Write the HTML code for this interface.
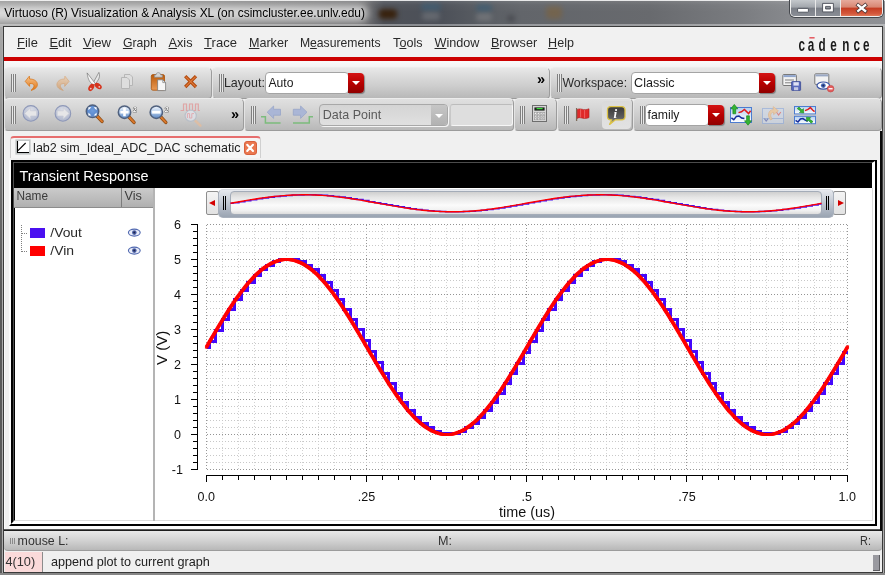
<!DOCTYPE html>
<html>
<head>
<meta charset="utf-8">
<title>Virtuoso (R) Visualization &amp; Analysis XL</title>
<style>
*{box-sizing:border-box;margin:0;padding:0}
html,body{width:885px;height:575px;overflow:hidden;background:#8c8e92}
body{position:relative;font-family:"Liberation Sans",sans-serif;font-size:13px;color:#1a1a1a}
/* title bar */
#title{position:absolute;left:0;top:0;width:885px;height:27px;overflow:hidden;background:linear-gradient(90deg,#8c8c8c 0,#808080 200px,#6c6c6e 365px,#4e5158 384px,#4c5058 440px,#585c62 480px,#62656a 520px,#686a6e 650px,#7a7c80 740px,#8a8c90 800px,#8e9094 885px)}
#title .shade{position:absolute;left:0;top:0;width:885px;height:27px;background:linear-gradient(180deg,rgba(255,255,255,.85) 0,rgba(255,255,255,.85) 1px,rgba(255,255,255,.10) 1.2px,rgba(255,255,255,.03) 5px,rgba(0,0,0,0) 12px,rgba(0,0,0,0) 24px,rgba(255,255,255,.35) 24.2px,rgba(255,255,255,.35) 26px)}
#title .glow{position:absolute;left:-14px;top:5px;width:382px;height:16px;background:#fff;opacity:.7;filter:blur(4px);border-radius:8px}
#title .blob{position:absolute;filter:blur(2.5px);border-radius:4px}
#title .txt{position:absolute;left:5px;top:6px;font-size:12px;line-height:14px;color:#000;white-space:nowrap;}
#wbtn{position:absolute;left:790px;top:0;width:93px;height:17px;border:1px solid #f0f0f0;border-top:0;border-radius:0 0 5px 5px;overflow:hidden;box-shadow:0 0 0 1px #44474c}
#wbtn div{position:absolute;top:0;height:16px}
#wbtn .mn{left:0;width:25px;background:linear-gradient(180deg,#c4c8cc 0,#a2a6ac 45%,#7a7e86 50%,#8a8e96 100%);border-right:1px solid #e8e8e8}
#wbtn .mx{left:25px;width:25px;background:linear-gradient(180deg,#c4c8cc 0,#a2a6ac 45%,#7a7e86 50%,#8a8e96 100%);border-right:1px solid #e8e8e8}
#wbtn .cl{left:50px;width:42px;background:linear-gradient(180deg,#e6aa9c 0,#d88672 45%,#c43c22 50%,#d4583c 85%,#e07858 100%)}
/* frame */
#frameL{position:absolute;left:0;top:27px;width:3px;height:548px;background:linear-gradient(180deg,#a8a8a8 0,#9a9a9a 60px,#707070 150px,#5a5a5a 260px,#5a5a5a 100%);border-right:1px solid #ababab}
#frame{position:absolute;left:3px;top:26px;width:880px;height:547px;border:1px solid #3a3a3a;background:#f0f0f0}
/* menubar */
#menubar{position:absolute;left:4px;top:27px;width:878px;height:30px;background:#f1f1f1}
#menubar span{position:absolute;top:8px;font-size:13px;line-height:15px;white-space:nowrap;color:#2a2a2a}
#menubar u{text-decoration:underline;text-underline-offset:1px;text-decoration-thickness:1px}
#logo{position:absolute;left:799px;top:34px;width:72px;height:20px}
#redline{position:absolute;left:4px;top:57px;width:878px;height:4px;background:#cc0000}
#under{position:absolute;left:4px;top:61px;width:878px;height:7px;background:linear-gradient(180deg,#fafafa,#f2f2f2)}
/* toolbars */
.tb{position:absolute;background:linear-gradient(180deg,#e8e8e8 0,#dcdcdc 25%,#cdcdcd 60%,#b8b8b8 100%);border:1px solid #9c9c9c;border-top-color:#ececec;border-left-color:#e4e4e4;border-radius:5px 5px 4px 4px}
.tb.t2{background:linear-gradient(180deg,#e0e0e0 0,#d6d6d6 30%,#c8c8c8 65%,#b8b8b8 100%)}
.grip{position:absolute;width:5px;border-left:1px solid #808080;border-right:1px solid #808080;background:#e8e8e8}
.grip:after{content:"";position:absolute;left:1px;top:0;bottom:0;width:1px;background:#808080}
.lbl{position:absolute;font-size:13px;line-height:15px;white-space:nowrap;color:#2a2a2a}
.combo{position:absolute;background:#fff;border:1px solid #a4a4a4;border-radius:4px}
.combo .t{position:absolute;left:3px;top:2px;font-size:13px;line-height:15px;white-space:nowrap}
.rbtn{position:absolute;background:linear-gradient(180deg,#d41414 0,#b80000 50%,#900000 100%);border-radius:0 4px 4px 0;box-shadow:1px 1px 1px rgba(0,0,0,.35)}
.rbtn:after{content:"";position:absolute;left:50%;top:50%;margin:-2px 0 0 -4px;border:4px solid transparent;border-top:4px solid #fff;border-bottom:0}
.chev{position:absolute;font-size:14.5px;font-weight:bold;color:#000;line-height:14px;letter-spacing:-1px}
.combo.dis{background:linear-gradient(180deg,#d4d4d4,#e0e0e0);border-color:#a8a8a8;box-shadow:1px 1px 0 #f4f4f4}
.combo.dis .t{color:#5a5a5a}
.combo.dis .gb{position:absolute;right:0;top:0;bottom:0;width:16px;background:linear-gradient(180deg,#c6c6c6,#b2b2b2);border-radius:0 3px 3px 0}
.combo.dis .gb:after{content:"";position:absolute;left:4px;top:9px;border:4px solid transparent;border-top:4px solid #fff;border-bottom:0}
.field{position:absolute;background:#dedede;border:1px solid #f6f6f6;border-top-color:#bcbcbc;border-left-color:#c8c8c8;border-radius:3px}
.pressed{position:absolute;background:linear-gradient(180deg,#dadada,#e2e2e2);border-radius:4px}
/* tab */
#tab{position:absolute;left:10px;top:136px;width:251px;height:22px;background:#f5f5f5;border:1px solid #d0d0d0;border-top:2px solid #e66e6e;border-bottom:0;border-radius:4px 4px 0 0}
#tab span{position:absolute;left:23px;top:2px;font-size:13px;line-height:15px;white-space:nowrap;color:#222}
.tclose{position:absolute;left:233px;top:3px;width:13px;height:14px;background:#ea7850;border:1px solid #d8603c;border-radius:3px}
/* panel */
#panel{position:absolute;left:11px;top:160px;width:866px;height:366px;background:#000}
#pwhite{position:absolute;left:15px;top:163px;width:860px;height:361px;background:#fff}
#pwhite2{position:absolute;left:15px;top:188px;width:858px;height:333px;background:#fff;border-right:1px solid #dcdcdc;border-bottom:1px solid #dcdcdc}
#ptitle{position:absolute;left:15px;top:163px;width:857px;height:25px;background:#000;color:#fff;font-size:15px;line-height:25px;white-space:nowrap}
#ptitle span{position:absolute;left:5px;top:0}
#lhead{position:absolute;left:14px;top:188px;width:140px;height:20px;background:linear-gradient(180deg,#cbcbcb,#b0b0b0);border-bottom:1px solid #8c8c8c}
#lhead span{position:absolute;top:1px;font-size:12.5px;line-height:15px;color:#3c3c3c}
#lhead i{position:absolute;left:107px;top:0;width:1px;height:19px;background:#7c7c7c}
#split{position:absolute;left:153px;top:188px;width:2px;height:333px;background:#b4b4b4}
.sw{position:absolute;width:15px;height:10px}
/* slider */
.sarrow{position:absolute;width:13px;height:24px;background:linear-gradient(180deg,#f4f4f4,#e2e2e2);border:1px solid #8e8e8e;border-radius:2px}
.sarrow b{position:absolute;top:7.5px;border:3.2px solid transparent}
.sarrow b.l{left:2px;border-right:6px solid #d40000;border-left:0}
.sarrow b.r{left:4px;border-left:6px solid #d40000;border-right:0}
#thumb{position:absolute;left:218px;top:189px;width:616px;height:29px;border-radius:5px;background:linear-gradient(180deg,#e6e9ee 0,#c4cad4 45%,#9aa4b2 100%);border:1px solid #a8b0bc;border-top-color:#d8dce2}
#thumb .inner{position:absolute;left:11px;top:1px;right:11px;height:24px;border-radius:4px;border:1px solid #a4acb8;background:linear-gradient(180deg,#cfcfcf 0,#e6e6e6 25%,#fbfbfb 60%,#f0f0f0 85%,#dcdcdc 100%)}
#thumb i{position:absolute;top:6px;width:1.4px;height:13.6px;background:#000}
/* status */
#sbar{position:absolute;left:4px;top:531px;width:878px;height:20px;background:linear-gradient(180deg,#e8e8e8,#d2d2d2 50%,#b8b8b8);border-bottom:1px solid #9c9c9c;border-radius:0 0 4px 4px}
#sbar span{position:absolute;top:3px;font-size:12px;line-height:14px;color:#333;white-space:nowrap}
#cmd{position:absolute;left:4px;top:551px;width:878px;height:21px;background:#f0f0f0}
#cmd .num{position:absolute;left:1px;top:1px;width:37px;height:20px;background:#fadada;font-size:13px;line-height:20px;padding-left:1px;color:#333}
#cmd .sep{position:absolute;left:38px;top:1px;width:1px;height:20px;background:#8c8c8c}
#cmd .num span{position:static;display:inline-block}
#cmd>span{position:absolute;left:48px;top:3px;font-size:13px;line-height:15px;color:#222;white-space:nowrap}
#cmd .sz{position:absolute;left:869px;top:4px;width:7px;height:16px;background:#9a9aa0;border-right:1px solid #5c5c60;border-bottom:1px solid #5c5c60}
#oline{position:absolute;left:4px;top:529px;width:878px;height:2px;background:linear-gradient(180deg,#777,#000)}
#orline{position:absolute;left:880px;top:131px;width:2px;height:400px;background:#0a0a0a}
#pbev{position:absolute;left:13px;top:162px;width:861px;height:360px;border-left:1px solid #4c4c4c;border-top:1px solid #4c4c4c}
#menubar span,.lbl,.combo .t,#tab span,#tTR,#lhead span,#sbar span,#cmd span,#tTitle,.chev{filter:grayscale(1)}
#frameR{position:absolute;left:883px;top:27px;width:2px;height:548px;background:linear-gradient(180deg,#a8a8a8 0,#9a9a9a 60px,#707070 150px,#5a5a5a 260px,#5a5a5a 100%);border-left:1px solid #ababab}
#frameB{position:absolute;left:0;top:573px;width:885px;height:2px;background:#878787}
.wstrip{position:absolute;background:#fafafa}
#tTitle{transform:translateX(-0.70px) scaleX(0.9951);transform-origin:0 50%}
#m1{transform:translateX(0.10px) scaleX(0.9920);transform-origin:0 50%}
#m2{transform:translateX(-0.50px) scaleX(0.9819);transform-origin:0 50%}
#m3{transform:translateX(-0.10px) scaleX(1.0088);transform-origin:0 50%}
#m4{transform:translateX(-0.10px) scaleX(0.9404);transform-origin:0 50%}
#m5{transform:translateX(-0.50px) scaleX(0.9771);transform-origin:0 50%}
#m6{transform:translateX(0.10px) scaleX(1.0010);transform-origin:0 50%}
#m7{transform:translateX(-0.10px) scaleX(0.9686);transform-origin:0 50%}
#m8{transform:translateX(-0.10px) scaleX(0.9372);transform-origin:0 50%}
#m9{transform:translateX(0.10px) scaleX(0.9684);transform-origin:0 50%}
#m10{transform:translateX(-0.50px) scaleX(0.9730);transform-origin:0 50%}
#m11{transform:translateX(-0.10px) scaleX(0.9688);transform-origin:0 50%}
#m12{transform:translateX(0.10px) scaleX(0.9645);transform-origin:0 50%}
#tLay{transform:translateX(-0.10px) scaleX(0.9612);transform-origin:0 50%}
#tAuto{transform:translateX(-0.50px) scaleX(0.9346);transform-origin:0 50%}
#tWs{transform:translateX(-0.50px) scaleX(0.9444);transform-origin:0 50%}
#tCls{transform:translateX(-0.90px) scaleX(0.9641);transform-origin:0 50%}
#tDP{transform:translateX(-0.20px) scaleX(0.9621);transform-origin:0 50%}
#tFam{transform:translateX(-1.50px) scaleX(0.9425);transform-origin:0 50%}
#tTab{transform:translateX(-0.90px) scaleX(0.9633);transform-origin:0 50%}
#tTR{transform:translateX(-0.50px) scaleX(0.9649);transform-origin:0 50%}
#tName{transform:translateX(-0.50px) scaleX(0.9447);transform-origin:0 50%}
#tVis{transform:translateX(-0.50px) scaleX(1.0151);transform-origin:0 50%}
#tVout{transform:translateX(0.30px) scaleX(1.0661);transform-origin:0 50%}
#tVin{transform:translateX(0.30px) scaleX(1.0734);transform-origin:0 50%}
#tML{transform:translateX(-0.40px) scaleX(1.0312);transform-origin:0 50%}
#tMM{transform:translateX(-0.10px) scaleX(1.0492);transform-origin:0 50%}
#tMR{transform:translateX(0.10px) scaleX(0.9083);transform-origin:0 50%}
#tNum{transform:translateX(-0.60px) scaleX(0.9816);transform-origin:0 50%}
#tCmd{transform:translateX(-1.00px) scaleX(0.9722);transform-origin:0 50%}
</style>
</head>
<body>
<div id="title"><div class="blob" style="left:379px;top:9px;width:18px;height:10px;background:#38220e"></div><div class="blob" style="left:421px;top:3px;width:20px;height:8px;background:#3c5a70;opacity:.8"></div><div class="blob" style="left:422px;top:12px;width:18px;height:8px;background:#70747a;opacity:.7"></div><div class="blob" style="left:476px;top:4px;width:16px;height:8px;background:#3c5a70;opacity:.8"></div><div class="blob" style="left:476px;top:13px;width:16px;height:8px;background:#7a7c80;opacity:.7"></div><div class="blob" style="left:507px;top:15px;width:8px;height:7px;background:#4a4c52"></div><div class="blob" style="left:546px;top:6px;width:16px;height:13px;background:#806238;opacity:.55"></div><div class="shade"></div><div class="glow"></div><div class="txt" id="tTitle">Virtuoso (R) Visualization &amp; Analysis XL (on csimcluster.ee.unlv.edu)</div>
<div id="wbtn"><div class="mn"></div><div class="mx"></div><div class="cl"></div></div></div>
<div id="frameL"></div><div id="frameR"></div><div id="frameB"></div><div id="frame"></div>
<div id="menubar">
<span id="m1" style="left:13px"><u>F</u>ile</span>
<span id="m2" style="left:46px"><u>E</u>dit</span>
<span id="m3" style="left:79px"><u>V</u>iew</span>
<span id="m4" style="left:119px"><u>G</u>raph</span>
<span id="m5" style="left:165px"><u>A</u>xis</span>
<span id="m6" style="left:200px"><u>T</u>race</span>
<span id="m7" style="left:245px"><u>M</u>arker</span>
<span id="m8" style="left:296px">M<u>e</u>asurements</span>
<span id="m9" style="left:389px">T<u>o</u>ols</span>
<span id="m10" style="left:431px"><u>W</u>indow</span>
<span id="m11" style="left:487px"><u>B</u>rowser</span>
<span id="m12" style="left:544px"><u>H</u>elp</span>
</div>
<div id="redline"></div><div id="under"></div>
<!-- toolbar row 1 -->
<div class="tb" style="left:4px;top:67px;width:208px;height:32px"></div>
<div class="tb" style="left:212px;top:67px;width:338px;height:32px"></div>
<div class="tb" style="left:550px;top:67px;width:332px;height:32px"></div>
<!-- toolbar row 2 -->
<div class="tb t2" style="left:4px;top:98px;width:240px;height:33px"></div>
<div class="tb t2" style="left:244px;top:98px;width:270px;height:33px"></div>
<div class="tb t2" style="left:514px;top:98px;width:43px;height:33px"></div>
<div class="tb t2" style="left:557px;top:98px;width:76px;height:33px"></div>
<div class="tb t2" style="left:633px;top:98px;width:249px;height:33px"></div>
<div class="grip" style="left:11px;top:74px;height:18px"></div>
<div class="grip" style="left:219px;top:74px;height:18px"></div>
<div class="grip" style="left:557px;top:74px;height:18px"></div>
<div class="grip" style="left:11px;top:106px;height:18px"></div>
<div class="grip" style="left:251px;top:106px;height:18px"></div>
<div class="grip" style="left:520px;top:106px;height:18px"></div>
<div class="grip" style="left:564px;top:106px;height:18px"></div>
<div class="grip" style="left:640px;top:106px;height:18px"></div>
<div class="lbl" id="tLay" style="left:224px;top:75px">Layout:</div>
<div class="combo" style="left:265px;top:72px;width:84px;height:22px"><div class="t" id="tAuto" style="top:2px">Auto</div></div>
<div class="rbtn" style="left:348px;top:73px;width:16px;height:20px"></div>
<div class="chev" style="left:537px;top:72px">&raquo;</div>
<div class="lbl" id="tWs" style="left:563px;top:75px">Workspace:</div>
<div class="combo" style="left:631px;top:72px;width:129px;height:22px"><div class="t" id="tCls" style="top:2px">Classic</div></div>
<div class="rbtn" style="left:759px;top:73px;width:16px;height:20px"></div>
<div class="chev" style="left:231px;top:107px">&raquo;</div>
<div class="combo dis" style="left:319px;top:104px;width:129px;height:22px"><div class="t" id="tDP">Data Point</div><div class="gb"></div></div>
<div class="field" style="left:450px;top:104px;width:63px;height:22px"></div>
<div class="pressed" style="left:602px;top:101px;width:29px;height:28px"></div>
<div class="combo" style="left:645px;top:104px;width:64px;height:22px"><div class="t" id="tFam">family</div></div>
<div class="rbtn" style="left:708px;top:105px;width:16px;height:20px"></div>
<div id="tab"><span id="tTab">lab2 sim_Ideal_ADC_DAC schematic</span><div class="tclose"></div></div>
<div class="wstrip" style="left:877px;top:160px;width:3px;height:369px"></div><div class="wstrip" style="left:9px;top:160px;width:2px;height:366px"></div><div class="wstrip" style="left:4px;top:131px;width:1px;height:398px"></div><div class="wstrip" style="left:9px;top:526px;width:871px;height:3px"></div><div id="panel"></div>
<div id="pbev"></div><div id="pwhite"></div><div id="pwhite2"></div><div id="oline"></div><div id="orline"></div>
<div id="ptitle"><span id="tTR">Transient Response</span></div>
<div id="lhead"><span id="tName" style="left:3px">Name</span><i></i><span id="tVis" style="left:111px">Vis</span></div>
<div id="split"></div>
<div class="sw" style="left:30px;top:228px;background:#4a10f0"></div>
<div class="sw" style="left:30px;top:246px;background:#ff0000"></div>
<div class="lbl" id="tVout" style="left:50px;top:225px">/Vout</div>
<div class="lbl" id="tVin" style="left:50px;top:243px">/Vin</div>
<div class="sarrow" style="left:206px;top:191px"><b class="l"></b></div>
<div class="sarrow" style="left:833px;top:191px"><b class="r"></b></div>
<div id="thumb"><div class="inner"></div><i style="left:3.8px"></i><i style="left:5.9px"></i><i style="right:5.9px"></i><i style="right:3.8px"></i></div>
<svg id="plot" width="885" height="575" viewBox="0 0 885 575" style="position:absolute;left:0;top:0"><g stroke-width="1" stroke-dasharray="1 2" shape-rendering="crispEdges"><line x1="206.5" y1="224.5" x2="206.5" y2="469.5" stroke="#989898"/><line x1="222.5" y1="224.5" x2="222.5" y2="469.5" stroke="#d2d2d2"/><line x1="238.5" y1="224.5" x2="238.5" y2="469.5" stroke="#d2d2d2"/><line x1="254.5" y1="224.5" x2="254.5" y2="469.5" stroke="#d2d2d2"/><line x1="270.5" y1="224.5" x2="270.5" y2="469.5" stroke="#d2d2d2"/><line x1="286.5" y1="224.5" x2="286.5" y2="469.5" stroke="#d2d2d2"/><line x1="302.5" y1="224.5" x2="302.5" y2="469.5" stroke="#d2d2d2"/><line x1="318.5" y1="224.5" x2="318.5" y2="469.5" stroke="#d2d2d2"/><line x1="334.5" y1="224.5" x2="334.5" y2="469.5" stroke="#d2d2d2"/><line x1="350.5" y1="224.5" x2="350.5" y2="469.5" stroke="#d2d2d2"/><line x1="366.5" y1="224.5" x2="366.5" y2="469.5" stroke="#989898"/><line x1="382.5" y1="224.5" x2="382.5" y2="469.5" stroke="#d2d2d2"/><line x1="398.5" y1="224.5" x2="398.5" y2="469.5" stroke="#d2d2d2"/><line x1="414.5" y1="224.5" x2="414.5" y2="469.5" stroke="#d2d2d2"/><line x1="430.5" y1="224.5" x2="430.5" y2="469.5" stroke="#d2d2d2"/><line x1="446.5" y1="224.5" x2="446.5" y2="469.5" stroke="#d2d2d2"/><line x1="462.5" y1="224.5" x2="462.5" y2="469.5" stroke="#d2d2d2"/><line x1="478.5" y1="224.5" x2="478.5" y2="469.5" stroke="#d2d2d2"/><line x1="494.5" y1="224.5" x2="494.5" y2="469.5" stroke="#d2d2d2"/><line x1="510.5" y1="224.5" x2="510.5" y2="469.5" stroke="#d2d2d2"/><line x1="526.5" y1="224.5" x2="526.5" y2="469.5" stroke="#989898"/><line x1="542.5" y1="224.5" x2="542.5" y2="469.5" stroke="#d2d2d2"/><line x1="558.5" y1="224.5" x2="558.5" y2="469.5" stroke="#d2d2d2"/><line x1="574.5" y1="224.5" x2="574.5" y2="469.5" stroke="#d2d2d2"/><line x1="590.5" y1="224.5" x2="590.5" y2="469.5" stroke="#d2d2d2"/><line x1="606.5" y1="224.5" x2="606.5" y2="469.5" stroke="#d2d2d2"/><line x1="622.5" y1="224.5" x2="622.5" y2="469.5" stroke="#d2d2d2"/><line x1="638.5" y1="224.5" x2="638.5" y2="469.5" stroke="#d2d2d2"/><line x1="654.5" y1="224.5" x2="654.5" y2="469.5" stroke="#d2d2d2"/><line x1="670.5" y1="224.5" x2="670.5" y2="469.5" stroke="#d2d2d2"/><line x1="686.5" y1="224.5" x2="686.5" y2="469.5" stroke="#989898"/><line x1="702.5" y1="224.5" x2="702.5" y2="469.5" stroke="#d2d2d2"/><line x1="718.5" y1="224.5" x2="718.5" y2="469.5" stroke="#d2d2d2"/><line x1="734.5" y1="224.5" x2="734.5" y2="469.5" stroke="#d2d2d2"/><line x1="750.5" y1="224.5" x2="750.5" y2="469.5" stroke="#d2d2d2"/><line x1="766.5" y1="224.5" x2="766.5" y2="469.5" stroke="#d2d2d2"/><line x1="782.5" y1="224.5" x2="782.5" y2="469.5" stroke="#d2d2d2"/><line x1="798.5" y1="224.5" x2="798.5" y2="469.5" stroke="#d2d2d2"/><line x1="814.5" y1="224.5" x2="814.5" y2="469.5" stroke="#d2d2d2"/><line x1="830.5" y1="224.5" x2="830.5" y2="469.5" stroke="#d2d2d2"/><line x1="847.5" y1="224.5" x2="847.5" y2="469.5" stroke="#989898"/><line x1="206.5" y1="224.50" x2="847.5" y2="224.50" stroke="#949494"/><line x1="206.5" y1="231.50" x2="847.5" y2="231.50" stroke="#c8c8c8"/><line x1="206.5" y1="238.50" x2="847.5" y2="238.50" stroke="#c8c8c8"/><line x1="206.5" y1="245.50" x2="847.5" y2="245.50" stroke="#c8c8c8"/><line x1="206.5" y1="252.50" x2="847.5" y2="252.50" stroke="#c8c8c8"/><line x1="206.5" y1="259.50" x2="847.5" y2="259.50" stroke="#949494"/><line x1="206.5" y1="266.50" x2="847.5" y2="266.50" stroke="#c8c8c8"/><line x1="206.5" y1="273.50" x2="847.5" y2="273.50" stroke="#c8c8c8"/><line x1="206.5" y1="280.50" x2="847.5" y2="280.50" stroke="#c8c8c8"/><line x1="206.5" y1="287.50" x2="847.5" y2="287.50" stroke="#c8c8c8"/><line x1="206.5" y1="294.50" x2="847.5" y2="294.50" stroke="#949494"/><line x1="206.5" y1="301.50" x2="847.5" y2="301.50" stroke="#c8c8c8"/><line x1="206.5" y1="308.50" x2="847.5" y2="308.50" stroke="#c8c8c8"/><line x1="206.5" y1="315.50" x2="847.5" y2="315.50" stroke="#c8c8c8"/><line x1="206.5" y1="322.50" x2="847.5" y2="322.50" stroke="#c8c8c8"/><line x1="206.5" y1="329.50" x2="847.5" y2="329.50" stroke="#949494"/><line x1="206.5" y1="336.50" x2="847.5" y2="336.50" stroke="#c8c8c8"/><line x1="206.5" y1="343.50" x2="847.5" y2="343.50" stroke="#c8c8c8"/><line x1="206.5" y1="350.50" x2="847.5" y2="350.50" stroke="#c8c8c8"/><line x1="206.5" y1="357.50" x2="847.5" y2="357.50" stroke="#c8c8c8"/><line x1="206.5" y1="364.50" x2="847.5" y2="364.50" stroke="#949494"/><line x1="206.5" y1="371.50" x2="847.5" y2="371.50" stroke="#c8c8c8"/><line x1="206.5" y1="378.50" x2="847.5" y2="378.50" stroke="#c8c8c8"/><line x1="206.5" y1="385.50" x2="847.5" y2="385.50" stroke="#c8c8c8"/><line x1="206.5" y1="392.50" x2="847.5" y2="392.50" stroke="#c8c8c8"/><line x1="206.5" y1="399.50" x2="847.5" y2="399.50" stroke="#949494"/><line x1="206.5" y1="406.50" x2="847.5" y2="406.50" stroke="#c8c8c8"/><line x1="206.5" y1="413.50" x2="847.5" y2="413.50" stroke="#c8c8c8"/><line x1="206.5" y1="420.50" x2="847.5" y2="420.50" stroke="#c8c8c8"/><line x1="206.5" y1="427.50" x2="847.5" y2="427.50" stroke="#c8c8c8"/><line x1="206.5" y1="434.50" x2="847.5" y2="434.50" stroke="#949494"/><line x1="206.5" y1="441.50" x2="847.5" y2="441.50" stroke="#c8c8c8"/><line x1="206.5" y1="448.50" x2="847.5" y2="448.50" stroke="#c8c8c8"/><line x1="206.5" y1="455.50" x2="847.5" y2="455.50" stroke="#c8c8c8"/><line x1="206.5" y1="462.50" x2="847.5" y2="462.50" stroke="#c8c8c8"/><line x1="206.5" y1="469.50" x2="847.5" y2="469.50" stroke="#949494"/></g><g stroke="#000" stroke-width="1" shape-rendering="crispEdges"><line x1="197.5" y1="224.0" x2="197.5" y2="470.0"/><line x1="191" y1="224.5" x2="198" y2="224.5"/><line x1="193" y1="231.5" x2="198" y2="231.5"/><line x1="193" y1="238.5" x2="198" y2="238.5"/><line x1="193" y1="245.5" x2="198" y2="245.5"/><line x1="193" y1="252.5" x2="198" y2="252.5"/><line x1="191" y1="259.5" x2="198" y2="259.5"/><line x1="193" y1="266.5" x2="198" y2="266.5"/><line x1="193" y1="273.5" x2="198" y2="273.5"/><line x1="193" y1="280.5" x2="198" y2="280.5"/><line x1="193" y1="287.5" x2="198" y2="287.5"/><line x1="191" y1="294.5" x2="198" y2="294.5"/><line x1="193" y1="301.5" x2="198" y2="301.5"/><line x1="193" y1="308.5" x2="198" y2="308.5"/><line x1="193" y1="315.5" x2="198" y2="315.5"/><line x1="193" y1="322.5" x2="198" y2="322.5"/><line x1="191" y1="329.5" x2="198" y2="329.5"/><line x1="193" y1="336.5" x2="198" y2="336.5"/><line x1="193" y1="343.5" x2="198" y2="343.5"/><line x1="193" y1="350.5" x2="198" y2="350.5"/><line x1="193" y1="357.5" x2="198" y2="357.5"/><line x1="191" y1="364.5" x2="198" y2="364.5"/><line x1="193" y1="371.5" x2="198" y2="371.5"/><line x1="193" y1="378.5" x2="198" y2="378.5"/><line x1="193" y1="385.5" x2="198" y2="385.5"/><line x1="193" y1="392.5" x2="198" y2="392.5"/><line x1="191" y1="399.5" x2="198" y2="399.5"/><line x1="193" y1="406.5" x2="198" y2="406.5"/><line x1="193" y1="413.5" x2="198" y2="413.5"/><line x1="193" y1="420.5" x2="198" y2="420.5"/><line x1="193" y1="427.5" x2="198" y2="427.5"/><line x1="191" y1="434.5" x2="198" y2="434.5"/><line x1="193" y1="441.5" x2="198" y2="441.5"/><line x1="193" y1="448.5" x2="198" y2="448.5"/><line x1="193" y1="455.5" x2="198" y2="455.5"/><line x1="193" y1="462.5" x2="198" y2="462.5"/><line x1="191" y1="469.5" x2="198" y2="469.5"/><line x1="206.0" y1="475.5" x2="848.0" y2="475.5"/><line x1="206.5" y1="475" x2="206.5" y2="482"/><line x1="222.5" y1="475" x2="222.5" y2="480"/><line x1="238.5" y1="475" x2="238.5" y2="480"/><line x1="254.5" y1="475" x2="254.5" y2="480"/><line x1="270.5" y1="475" x2="270.5" y2="480"/><line x1="286.5" y1="475" x2="286.5" y2="480"/><line x1="302.5" y1="475" x2="302.5" y2="480"/><line x1="318.5" y1="475" x2="318.5" y2="480"/><line x1="334.5" y1="475" x2="334.5" y2="480"/><line x1="350.5" y1="475" x2="350.5" y2="480"/><line x1="366.5" y1="475" x2="366.5" y2="482"/><line x1="382.5" y1="475" x2="382.5" y2="480"/><line x1="398.5" y1="475" x2="398.5" y2="480"/><line x1="414.5" y1="475" x2="414.5" y2="480"/><line x1="430.5" y1="475" x2="430.5" y2="480"/><line x1="446.5" y1="475" x2="446.5" y2="480"/><line x1="462.5" y1="475" x2="462.5" y2="480"/><line x1="478.5" y1="475" x2="478.5" y2="480"/><line x1="494.5" y1="475" x2="494.5" y2="480"/><line x1="510.5" y1="475" x2="510.5" y2="480"/><line x1="526.5" y1="475" x2="526.5" y2="482"/><line x1="542.5" y1="475" x2="542.5" y2="480"/><line x1="558.5" y1="475" x2="558.5" y2="480"/><line x1="574.5" y1="475" x2="574.5" y2="480"/><line x1="590.5" y1="475" x2="590.5" y2="480"/><line x1="606.5" y1="475" x2="606.5" y2="480"/><line x1="622.5" y1="475" x2="622.5" y2="480"/><line x1="638.5" y1="475" x2="638.5" y2="480"/><line x1="654.5" y1="475" x2="654.5" y2="480"/><line x1="670.5" y1="475" x2="670.5" y2="480"/><line x1="686.5" y1="475" x2="686.5" y2="482"/><line x1="702.5" y1="475" x2="702.5" y2="480"/><line x1="718.5" y1="475" x2="718.5" y2="480"/><line x1="734.5" y1="475" x2="734.5" y2="480"/><line x1="750.5" y1="475" x2="750.5" y2="480"/><line x1="766.5" y1="475" x2="766.5" y2="480"/><line x1="782.5" y1="475" x2="782.5" y2="480"/><line x1="798.5" y1="475" x2="798.5" y2="480"/><line x1="814.5" y1="475" x2="814.5" y2="480"/><line x1="830.5" y1="475" x2="830.5" y2="480"/><line x1="847.5" y1="475" x2="847.5" y2="482"/></g><g font-family="Liberation Sans, sans-serif" font-size="13.5" fill="#111" style="filter:grayscale(1)"><text transform="translate(177.4,229.2) scale(.93,1)" text-anchor="middle">6</text><text transform="translate(177.4,264.2) scale(.93,1)" text-anchor="middle">5</text><text transform="translate(177.4,299.2) scale(.93,1)" text-anchor="middle">4</text><text transform="translate(177.4,334.2) scale(.93,1)" text-anchor="middle">3</text><text transform="translate(177.4,369.2) scale(.93,1)" text-anchor="middle">2</text><text transform="translate(177.4,404.2) scale(.93,1)" text-anchor="middle">1</text><text transform="translate(177.4,439.2) scale(.93,1)" text-anchor="middle">0</text><text transform="translate(177.4,474.2) scale(.93,1)" text-anchor="middle">-1</text><text transform="translate(206.2,500.8) scale(.93,1)" text-anchor="middle">0.0</text><text transform="translate(366.4,500.8) scale(.93,1)" text-anchor="middle">.25</text><text transform="translate(526.7,500.8) scale(.93,1)" text-anchor="middle">.5</text><text transform="translate(687.0,500.8) scale(.93,1)" text-anchor="middle">.75</text><text transform="translate(847.2,500.8) scale(.93,1)" text-anchor="middle">1.0</text><text transform="translate(527,516.6) scale(.96,1)" text-anchor="middle" font-size="15">time (us)</text><text transform="translate(167,347.8) rotate(-90)" text-anchor="middle" font-size="15">V (V)</text></g><path d="M206.50,347.00 H209.5 V341.5 H215.5 V330.5 H222.5 V319.5 H228.5 V309.5 H234.5 V299.5 H241.5 V290.5 H247.5 V282.5 H254.5 V275.5 H260.5 V269.5 H266.5 V265.5 H273.5 V261.5 H279.5 V259.5 H286.5 V259.5 H292.5 V259.5 H298.5 V261.5 H305.5 V265.5 H311.5 V269.5 H318.5 V275.5 H324.5 V282.5 H331.5 V290.5 H337.5 V299.5 H343.5 V309.5 H350.5 V319.5 H356.5 V329.5 H363.5 V340.5 H369.5 V351.5 H375.5 V362.5 H382.5 V373.5 H388.5 V383.5 H395.5 V393.5 H401.5 V402.5 H407.5 V410.5 H414.5 V417.5 H420.5 V423.5 H427.5 V427.5 H433.5 V431.5 H440.5 V433.5 H446.5 V433.5 H452.5 V433.5 H459.5 V431.5 H465.5 V427.5 H472.5 V423.5 H478.5 V417.5 H484.5 V410.5 H491.5 V402.5 H497.5 V393.5 H504.5 V383.5 H510.5 V373.5 H516.5 V363.5 H523.5 V352.5 H529.5 V341.5 H536.5 V330.5 H542.5 V319.5 H548.5 V309.5 H555.5 V299.5 H561.5 V290.5 H568.5 V282.5 H574.5 V275.5 H581.5 V269.5 H587.5 V265.5 H593.5 V261.5 H600.5 V259.5 H606.5 V259.5 H613.5 V259.5 H619.5 V261.5 H625.5 V265.5 H632.5 V269.5 H638.5 V275.5 H645.5 V282.5 H651.5 V290.5 H657.5 V299.5 H664.5 V309.5 H670.5 V319.5 H677.5 V329.5 H683.5 V340.5 H690.5 V351.5 H696.5 V362.5 H702.5 V373.5 H709.5 V383.5 H715.5 V393.5 H722.5 V402.5 H728.5 V410.5 H734.5 V417.5 H741.5 V423.5 H747.5 V427.5 H754.5 V431.5 H760.5 V433.5 H766.5 V433.5 H773.5 V433.5 H779.5 V431.5 H786.5 V427.5 H792.5 V423.5 H798.5 V417.5 H805.5 V410.5 H811.5 V402.5 H818.5 V393.5 H824.5 V383.5 H831.5 V373.5 H837.5 V363.5 H843.5 V352.5 H847.50" fill="none" stroke="#4408fc" stroke-width="3" stroke-linejoin="miter" shape-rendering="crispEdges"/><defs><path id="vr" d="M206.5,347.0 L208.5,343.6 L210.5,340.1 L212.5,336.7 L214.5,333.3 L216.5,329.9 L218.5,326.6 L220.5,323.2 L222.5,320.0 L224.5,316.7 L226.5,313.5 L228.5,310.4 L230.5,307.3 L232.5,304.2 L234.5,301.3 L236.5,298.4 L238.6,295.6 L240.6,292.8 L242.6,290.2 L244.6,287.6 L246.6,285.1 L248.6,282.7 L250.6,280.5 L252.6,278.3 L254.6,276.2 L256.6,274.2 L258.6,272.4 L260.6,270.7 L262.6,269.0 L264.6,267.5 L266.6,266.2 L268.6,264.9 L270.6,263.8 L272.6,262.8 L274.6,261.9 L276.6,261.2 L278.6,260.6 L280.6,260.1 L282.6,259.8 L284.6,259.6 L286.6,259.5 L288.6,259.6 L290.6,259.8 L292.6,260.1 L294.6,260.6 L296.6,261.2 L298.6,261.9 L300.6,262.8 L302.6,263.8 L304.7,264.9 L306.7,266.2 L308.7,267.5 L310.7,269.0 L312.7,270.7 L314.7,272.4 L316.7,274.2 L318.7,276.2 L320.7,278.3 L322.7,280.5 L324.7,282.7 L326.7,285.1 L328.7,287.6 L330.7,290.2 L332.7,292.8 L334.7,295.6 L336.7,298.4 L338.7,301.3 L340.7,304.2 L342.7,307.3 L344.7,310.4 L346.7,313.5 L348.7,316.7 L350.7,320.0 L352.7,323.2 L354.7,326.6 L356.7,329.9 L358.7,333.3 L360.7,336.7 L362.7,340.1 L364.7,343.6 L366.8,347.0 L368.8,350.4 L370.8,353.9 L372.8,357.3 L374.8,360.7 L376.8,364.1 L378.8,367.4 L380.8,370.8 L382.8,374.0 L384.8,377.3 L386.8,380.5 L388.8,383.6 L390.8,386.7 L392.8,389.8 L394.8,392.7 L396.8,395.6 L398.8,398.4 L400.8,401.2 L402.8,403.8 L404.8,406.4 L406.8,408.9 L408.8,411.3 L410.8,413.5 L412.8,415.7 L414.8,417.8 L416.8,419.8 L418.8,421.6 L420.8,423.3 L422.8,425.0 L424.8,426.5 L426.8,427.8 L428.8,429.1 L430.9,430.2 L432.9,431.2 L434.9,432.1 L436.9,432.8 L438.9,433.4 L440.9,433.9 L442.9,434.2 L444.9,434.4 L446.9,434.5 L448.9,434.4 L450.9,434.2 L452.9,433.9 L454.9,433.4 L456.9,432.8 L458.9,432.1 L460.9,431.2 L462.9,430.2 L464.9,429.1 L466.9,427.8 L468.9,426.5 L470.9,425.0 L472.9,423.3 L474.9,421.6 L476.9,419.8 L478.9,417.8 L480.9,415.7 L482.9,413.5 L484.9,411.3 L486.9,408.9 L488.9,406.4 L490.9,403.8 L492.9,401.2 L494.9,398.4 L497.0,395.6 L499.0,392.7 L501.0,389.8 L503.0,386.7 L505.0,383.6 L507.0,380.5 L509.0,377.3 L511.0,374.0 L513.0,370.8 L515.0,367.4 L517.0,364.1 L519.0,360.7 L521.0,357.3 L523.0,353.9 L525.0,350.4 L527.0,347.0 L529.0,343.6 L531.0,340.1 L533.0,336.7 L535.0,333.3 L537.0,329.9 L539.0,326.6 L541.0,323.2 L543.0,320.0 L545.0,316.7 L547.0,313.5 L549.0,310.4 L551.0,307.3 L553.0,304.2 L555.0,301.3 L557.0,298.4 L559.0,295.6 L561.1,292.8 L563.1,290.2 L565.1,287.6 L567.1,285.1 L569.1,282.7 L571.1,280.5 L573.1,278.3 L575.1,276.2 L577.1,274.2 L579.1,272.4 L581.1,270.7 L583.1,269.0 L585.1,267.5 L587.1,266.2 L589.1,264.9 L591.1,263.8 L593.1,262.8 L595.1,261.9 L597.1,261.2 L599.1,260.6 L601.1,260.1 L603.1,259.8 L605.1,259.6 L607.1,259.5 L609.1,259.6 L611.1,259.8 L613.1,260.1 L615.1,260.6 L617.1,261.2 L619.1,261.9 L621.1,262.8 L623.2,263.8 L625.2,264.9 L627.2,266.2 L629.2,267.5 L631.2,269.0 L633.2,270.7 L635.2,272.4 L637.2,274.2 L639.2,276.2 L641.2,278.3 L643.2,280.5 L645.2,282.7 L647.2,285.1 L649.2,287.6 L651.2,290.2 L653.2,292.8 L655.2,295.6 L657.2,298.4 L659.2,301.3 L661.2,304.2 L663.2,307.3 L665.2,310.4 L667.2,313.5 L669.2,316.7 L671.2,320.0 L673.2,323.2 L675.2,326.6 L677.2,329.9 L679.2,333.3 L681.2,336.7 L683.2,340.1 L685.2,343.6 L687.2,347.0 L689.3,350.4 L691.3,353.9 L693.3,357.3 L695.3,360.7 L697.3,364.1 L699.3,367.4 L701.3,370.8 L703.3,374.0 L705.3,377.3 L707.3,380.5 L709.3,383.6 L711.3,386.7 L713.3,389.8 L715.3,392.7 L717.3,395.6 L719.3,398.4 L721.3,401.2 L723.3,403.8 L725.3,406.4 L727.3,408.9 L729.3,411.3 L731.3,413.5 L733.3,415.7 L735.3,417.8 L737.3,419.8 L739.3,421.6 L741.3,423.3 L743.3,425.0 L745.3,426.5 L747.3,427.8 L749.3,429.1 L751.4,430.2 L753.4,431.2 L755.4,432.1 L757.4,432.8 L759.4,433.4 L761.4,433.9 L763.4,434.2 L765.4,434.4 L767.4,434.5 L769.4,434.4 L771.4,434.2 L773.4,433.9 L775.4,433.4 L777.4,432.8 L779.4,432.1 L781.4,431.2 L783.4,430.2 L785.4,429.1 L787.4,427.8 L789.4,426.5 L791.4,425.0 L793.4,423.3 L795.4,421.6 L797.4,419.8 L799.4,417.8 L801.4,415.7 L803.4,413.5 L805.4,411.3 L807.4,408.9 L809.4,406.4 L811.4,403.8 L813.4,401.2 L815.4,398.4 L817.5,395.6 L819.5,392.7 L821.5,389.8 L823.5,386.7 L825.5,383.6 L827.5,380.5 L829.5,377.3 L831.5,374.0 L833.5,370.8 L835.5,367.4 L837.5,364.1 L839.5,360.7 L841.5,357.3 L843.5,353.9 L845.5,350.4 L847.5,347.0"/></defs><g fill="none" stroke="#ff0000" stroke-width="1.05" stroke-linejoin="round" stroke-linecap="square"><use href="#vr" x="0" y="0"/><use href="#vr" x="-1" y="-1"/><use href="#vr" x="1" y="-1"/><use href="#vr" x="-1" y="1"/><use href="#vr" x="1" y="1"/><use href="#vr" x="0" y="-1"/><use href="#vr" x="0" y="1"/><use href="#vr" x="-1" y="0"/><use href="#vr" x="1" y="0"/></g><path d="M230.50,203.30 H233.04 V202.84 H238.95 V201.78 H244.86 V200.74 H250.77 V199.75 H256.68 V198.81 H262.59 V197.94 H268.50 V197.16 H274.41 V196.47 H280.32 V195.89 H286.23 V195.42 H292.14 V195.09 H298.05 V194.88 H303.96 V194.80 H309.87 V194.86 H315.78 V195.05 H321.69 V195.37 H327.60 V195.82 H333.51 V196.38 H339.42 V197.05 H345.33 V197.82 H351.24 V198.68 H357.15 V199.61 H363.06 V200.60 H368.97 V201.63 H374.88 V202.69 H380.79 V203.76 H386.70 V204.82 H392.61 V205.86 H398.52 V206.85 H404.43 V207.79 H410.34 V208.66 H416.25 V209.44 H422.16 V210.13 H428.07 V210.71 H433.98 V211.18 H439.89 V211.51 H445.80 V211.72 H451.71 V211.80 H457.62 V211.74 H463.53 V211.55 H469.44 V211.23 H475.35 V210.78 H481.26 V210.22 H487.17 V209.55 H493.08 V208.78 H498.99 V207.92 H504.90 V206.99 H510.81 V206.00 H516.72 V204.97 H522.63 V203.91 H528.54 V202.84 H534.45 V201.78 H540.36 V200.74 H546.27 V199.75 H552.18 V198.81 H558.09 V197.94 H564.00 V197.16 H569.91 V196.47 H575.82 V195.89 H581.73 V195.42 H587.64 V195.09 H593.55 V194.88 H599.46 V194.80 H605.37 V194.86 H611.28 V195.05 H617.19 V195.37 H623.10 V195.82 H629.01 V196.38 H634.92 V197.05 H640.83 V197.82 H646.74 V198.68 H652.65 V199.61 H658.56 V200.60 H664.47 V201.63 H670.38 V202.69 H676.29 V203.76 H682.20 V204.82 H688.11 V205.86 H694.02 V206.85 H699.93 V207.79 H705.84 V208.66 H711.75 V209.44 H717.66 V210.13 H723.57 V210.71 H729.48 V211.18 H735.39 V211.51 H741.30 V211.72 H747.21 V211.80 H753.12 V211.74 H759.03 V211.55 H764.94 V211.23 H770.85 V210.78 H776.76 V210.22 H782.67 V209.55 H788.58 V208.78 H794.49 V207.92 H800.40 V206.99 H806.31 V206.00 H812.22 V204.97 H818.13 V203.91 H821.50" fill="none" stroke="#4a12f2" stroke-width="1.5"/><path d="M230.50,203.30 L233.46,202.77 L236.41,202.23 L239.37,201.71 L242.32,201.19 L245.28,200.67 L248.23,200.17 L251.19,199.68 L254.14,199.21 L257.10,198.75 L260.05,198.30 L263.00,197.88 L265.96,197.48 L268.92,197.10 L271.87,196.75 L274.82,196.42 L277.78,196.12 L280.74,195.85 L283.69,195.61 L286.64,195.40 L289.60,195.22 L292.56,195.07 L295.51,194.95 L298.47,194.87 L301.42,194.82 L304.38,194.80 L307.33,194.82 L310.29,194.87 L313.24,194.95 L316.19,195.07 L319.15,195.22 L322.11,195.40 L325.06,195.61 L328.01,195.85 L330.97,196.12 L333.93,196.42 L336.88,196.75 L339.83,197.10 L342.79,197.48 L345.75,197.88 L348.70,198.30 L351.65,198.75 L354.61,199.21 L357.56,199.68 L360.52,200.17 L363.48,200.67 L366.43,201.19 L369.38,201.71 L372.34,202.23 L375.29,202.77 L378.25,203.30 L381.21,203.83 L384.16,204.37 L387.12,204.89 L390.07,205.41 L393.02,205.93 L395.98,206.43 L398.93,206.92 L401.89,207.39 L404.85,207.85 L407.80,208.30 L410.75,208.72 L413.71,209.12 L416.66,209.50 L419.62,209.85 L422.58,210.18 L425.53,210.48 L428.49,210.75 L431.44,210.99 L434.39,211.20 L437.35,211.38 L440.30,211.53 L443.26,211.65 L446.22,211.73 L449.17,211.78 L452.12,211.80 L455.08,211.78 L458.03,211.73 L460.99,211.65 L463.95,211.53 L466.90,211.38 L469.86,211.20 L472.81,210.99 L475.76,210.75 L478.72,210.48 L481.67,210.18 L484.63,209.85 L487.58,209.50 L490.54,209.12 L493.50,208.72 L496.45,208.30 L499.41,207.85 L502.36,207.39 L505.31,206.92 L508.27,206.43 L511.22,205.93 L514.18,205.41 L517.13,204.89 L520.09,204.37 L523.05,203.83 L526.00,203.30 L528.95,202.77 L531.91,202.23 L534.87,201.71 L537.82,201.19 L540.78,200.67 L543.73,200.17 L546.68,199.68 L549.64,199.21 L552.60,198.75 L555.55,198.30 L558.51,197.88 L561.46,197.48 L564.41,197.10 L567.37,196.75 L570.33,196.42 L573.28,196.12 L576.23,195.85 L579.19,195.61 L582.14,195.40 L585.10,195.22 L588.06,195.07 L591.01,194.95 L593.96,194.87 L596.92,194.82 L599.88,194.80 L602.83,194.82 L605.79,194.87 L608.74,194.95 L611.69,195.07 L614.65,195.22 L617.61,195.40 L620.56,195.61 L623.52,195.85 L626.47,196.12 L629.42,196.42 L632.38,196.75 L635.34,197.10 L638.29,197.48 L641.24,197.88 L644.20,198.30 L647.15,198.75 L650.11,199.21 L653.07,199.68 L656.02,200.17 L658.97,200.67 L661.93,201.19 L664.88,201.71 L667.84,202.23 L670.80,202.77 L673.75,203.30 L676.70,203.83 L679.66,204.37 L682.62,204.89 L685.57,205.41 L688.53,205.93 L691.48,206.43 L694.43,206.92 L697.39,207.39 L700.35,207.85 L703.30,208.30 L706.26,208.72 L709.21,209.12 L712.16,209.50 L715.12,209.85 L718.08,210.18 L721.03,210.48 L723.98,210.75 L726.94,210.99 L729.89,211.20 L732.85,211.38 L735.81,211.53 L738.76,211.65 L741.71,211.73 L744.67,211.78 L747.62,211.80 L750.58,211.78 L753.53,211.73 L756.49,211.65 L759.45,211.53 L762.40,211.38 L765.36,211.20 L768.31,210.99 L771.26,210.75 L774.22,210.48 L777.18,210.18 L780.13,209.85 L783.09,209.50 L786.04,209.12 L789.00,208.72 L791.95,208.30 L794.90,207.85 L797.86,207.39 L800.81,206.92 L803.77,206.43 L806.73,205.93 L809.68,205.41 L812.63,204.89 L815.59,204.37 L818.54,203.83 L821.50,203.30" fill="none" stroke="#ff0000" stroke-width="1.4"/></svg>
<div id="sbar"><span id="tML" style="left:14px">mouse L:</span><span id="tMM" style="left:434px">M:</span><span id="tMR" style="left:856px">R:</span></div>
<div id="cmd"><div class="num"><span id="tNum">4(10)</span></div><div class="sep"></div><span id="tCmd">append plot to current graph</span><div class="sz"></div></div>
<svg id="icons" width="885" height="575" viewBox="0 0 885 575" style="position:absolute;left:0;top:0;pointer-events:none">
<defs>
<linearGradient id="gOr" x1="0" y1="0" x2="0" y2="1"><stop offset="0" stop-color="#f8c58e"/><stop offset="1" stop-color="#de7414"/></linearGradient>
<linearGradient id="gClip" x1="0" y1="0" x2="0" y2="1"><stop offset="0" stop-color="#b85808"/><stop offset="1" stop-color="#ea9a54"/></linearGradient>
<linearGradient id="gLens" x1="0" y1="0" x2="0" y2="1"><stop offset="0" stop-color="#f2f6fc"/><stop offset=".45" stop-color="#b4cdec"/><stop offset="1" stop-color="#5c88c4"/></linearGradient>
<radialGradient id="gNav" cx=".5" cy=".3" r=".8"><stop offset="0" stop-color="#dcdfe8"/><stop offset="1" stop-color="#a8b0c8"/></radialGradient>
<linearGradient id="gBub" x1="0" y1="0" x2="0" y2="1"><stop offset="0" stop-color="#383838"/><stop offset=".6" stop-color="#5c5c5c"/><stop offset="1" stop-color="#9a9a9a"/></linearGradient>
<linearGradient id="gPane" x1="0" y1="0" x2="0" y2="1"><stop offset="0" stop-color="#b4d0f0"/><stop offset="1" stop-color="#ffffff"/></linearGradient>
<radialGradient id="gLensF" cx=".5" cy=".45" r=".6"><stop offset="0" stop-color="#6e9cdc"/><stop offset=".7" stop-color="#5a88cc"/><stop offset="1" stop-color="#a8c0e0"/></radialGradient></defs>
<!-- undo / redo -->
<path id="undo" d="M25.2,81.4 L29.4,76.1 L29.6,79 C34.5,79 37.4,81.5 37.4,84.6 C37.4,87.6 34.5,89.6 31,90.4 C32.8,88.8 34,87.2 34,85.8 C34,84 32,83.4 29.6,83.5 L29.6,86.4 Z" fill="url(#gOr)" stroke="#d8700f" stroke-width=".7" stroke-linejoin="round"/>
<path d="M25.2,81.4 L29.4,76.1 L29.6,79 C34.5,79 37.4,81.5 37.4,84.6 C37.4,87.6 34.5,89.6 31,90.4 C32.8,88.8 34,87.2 34,85.8 C34,84 32,83.4 29.6,83.5 L29.6,86.4 Z" transform="translate(94.3,0) scale(-1,1)" fill="url(#gOr)" stroke="#d8700f" stroke-width=".7" stroke-linejoin="round" opacity=".42"/>
<!-- scissors -->
<g stroke-linejoin="round">
<path d="M98.9,72.4 C100.2,75.2 99.6,78.2 97.4,81.2 L94.8,84.8 L93,83.2 Z" fill="#e6e6e6" stroke="#6a6a6a" stroke-width=".6"/>
<path d="M87.1,72.9 C87.4,76.2 88.4,79.6 90.2,82.2 L93.4,85.2 L95.2,83.4 Z" fill="#f6f6f6" stroke="#6a6a6a" stroke-width=".6"/>
<ellipse cx="91.3" cy="87.4" rx="4" ry="2.5" transform="rotate(-58 91.3 87.4)" fill="#d6341e"/>
<ellipse cx="98.2" cy="86" rx="4" ry="2.5" transform="rotate(38 98.2 86)" fill="#d6341e"/>
<circle cx="90.8" cy="88.6" r=".9" fill="#ecc8c0"/><circle cx="99.3" cy="86.8" r=".9" fill="#ecc8c0"/>
</g>
<!-- copy (disabled) -->
<g fill="#dedede" stroke="#b2b2b2" stroke-width=".9">
<path d="M124.5,74.5 H130 L132.5,77 V85.5 H124.5 Z"/>
<path d="M121.5,77.5 H127 L129.5,80 V88.5 H121.5 Z"/>
</g>
<!-- paste -->
<rect x="151.3" y="74.6" width="13.2" height="15.6" rx="1.6" fill="url(#gClip)" stroke="#a8520a" stroke-width=".8"/>
<path d="M154.4,77.2 V75 H156 C156,71.8 160.6,71.8 160.6,75 H162.4 V77.2 Z" fill="#d4d4d4" stroke="#8a8a8a" stroke-width=".7"/>
<path d="M157.6,79.8 H162.8 L165.6,82.6 V90.6 H157.6 Z" fill="#f6f6f6" stroke="#7a7a7a" stroke-width=".8"/>
<path d="M162.8,79.8 V82.6 H165.6" fill="none" stroke="#7a7a7a" stroke-width=".7"/>
<!-- delete X -->
<path d="M185.2,76.2 L196,87 M196,76.2 L185.2,87" stroke="#b24a0e" stroke-width="3.3" fill="none"/>
<path d="M185.6,76.6 L195.6,86.6 M195.6,76.6 L185.6,86.6" stroke="#e07a3a" stroke-width="1.2" fill="none"/>
<!-- save workspace -->
<rect x="782.8" y="74.5" width="13.6" height="11" rx="1" fill="#f2f2f2" stroke="#6c6c6c" stroke-width=".9"/>
<rect x="783.4" y="75.1" width="12.4" height="2" fill="#8ea4cc"/>
<path d="M785,80 H794 M785,82.8 H794" stroke="#808080" stroke-width="1"/>
<rect x="791.6" y="81.6" width="9" height="8.8" rx=".6" fill="#5a6abc" stroke="#3a4a94" stroke-width=".8"/>
<rect x="793.4" y="82.2" width="5.4" height="3.4" fill="#dfe2f4"/>
<rect x="794" y="87.2" width="4.2" height="3" fill="#c4c8e4"/>
<!-- eye workspace -->
<rect x="814.8" y="73.8" width="14" height="10.6" rx="1" fill="#f2f2f2" stroke="#6c6c6c" stroke-width=".9"/>
<rect x="815.4" y="74.4" width="12.8" height="2" fill="#9aa8c4"/>
<ellipse cx="823.3" cy="85.6" rx="6.3" ry="3.6" fill="#fff" stroke="#3a54a4" stroke-width="1.2"/>
<circle cx="823.3" cy="85.6" r="2.4" fill="#4464b4"/><circle cx="823.3" cy="85.6" r="1" fill="#1c2c5c"/>
<circle cx="830.6" cy="88.7" r="3.3" fill="#e25e5e" stroke="#c44040" stroke-width=".6"/>
<rect x="828.6" y="88.1" width="4" height="1.3" fill="#fff"/>
<!-- nav back / forward -->
<circle cx="30.9" cy="113.4" r="7.8" fill="url(#gNav)" stroke="#8e98b8" stroke-width="1.1"/>
<path d="M24.6,113.4 L30.6,107.8 V110.8 H36.6 V116 H30.6 V119 Z" fill="#e6e6e8" stroke="#c4c8d4" stroke-width=".6"/>
<circle cx="62.9" cy="113.4" r="7.8" fill="url(#gNav)" stroke="#8e98b8" stroke-width="1.1"/>
<path d="M69.2,113.4 L63.2,107.8 V110.8 H57.2 V116 H63.2 V119 Z" fill="#e6e6e8" stroke="#c4c8d4" stroke-width=".6"/>
<!-- zoom fit -->
<path d="M97,116 L102,121.4" stroke="#8a4a14" stroke-width="3.4" stroke-linecap="round"/>
<path d="M97,116 L102,121.4" stroke="#d8782c" stroke-width="2" stroke-linecap="round"/>
<circle cx="92.5" cy="111.3" r="6.2" fill="url(#gLensF)" stroke="#50617e" stroke-width="1.5"/>
<path d="M88.4,107.2 H91.4 L88.4,110.2 Z M96.6,107.2 H93.6 L96.6,110.2 Z M88.4,115.4 H91.4 L88.4,112.4 Z M96.6,115.4 H93.6 L96.6,112.4 Z" fill="#fff"/>
<!-- zoom in -->
<path d="M129,117 L134,122.4" stroke="#8a4a14" stroke-width="3.4" stroke-linecap="round"/>
<path d="M129,117 L134,122.4" stroke="#d8782c" stroke-width="2" stroke-linecap="round"/>
<circle cx="124.5" cy="112.2" r="6.2" fill="url(#gLens)" stroke="#50617e" stroke-width="1.5"/>
<path d="M120.4,110.9 H123.2 V108.1 H125.8 V110.9 H128.6 V113.5 H125.8 V116.3 H123.2 V113.5 H120.4 Z" fill="#fff"/>
<!-- zoom out -->
<path d="M160.8,117 L165.8,122.4" stroke="#8a4a14" stroke-width="3.4" stroke-linecap="round"/>
<path d="M160.8,117 L165.8,122.4" stroke="#d8782c" stroke-width="2" stroke-linecap="round"/>
<circle cx="156.3" cy="112.2" r="6.2" fill="url(#gLens)" stroke="#50617e" stroke-width="1.5"/>
<rect x="152.1" y="110.8" width="8.4" height="2.8" fill="#fff"/>
<g font-family="Liberation Sans, sans-serif" font-size="7" font-weight="bold" fill="#fff" stroke="#3a3a3a" stroke-width=".7" paint-order="stroke">
<text x="132.9" y="112.3">2</text><text x="164.8" y="112.3">2</text></g>
<!-- waveform zoom (disabled) -->
<g opacity=".75">
<path d="M180.6,110.5 H183.5 V104 H186.5 V110.5 H189.5 V104 H192.5 V110.5 H195.5 V104 H198.3 V110.5 H199.8" fill="none" stroke="#e29494" stroke-width="1.2"/>
<path d="M195,120.4 L200.4,125.6" stroke="#e4bc9c" stroke-width="2.6" stroke-linecap="round"/>
<circle cx="190.7" cy="115.8" r="5.6" fill="#e4e8ee" fill-opacity=".85" stroke="#b4bcc8" stroke-width="1.2"/>
<path d="M187.4,118 V113.6 H189.6 V118 H191.8 V113.6 H194" fill="none" stroke="#e6a0a8" stroke-width="1"/>
</g>
<!-- prev / next edge -->
<path d="M267.2,112.2 L273.6,106 V109.3 H280.5 V115.2 H273.6 V118.4 Z" fill="#aab6d6" stroke="#98a6c8" stroke-width=".8" stroke-linejoin="round"/>
<path d="M261,116.7 H265.4 V123 H280.6" fill="none" stroke="#7cbc7c" stroke-width="1.5"/>
<path d="M307,112.2 L300.6,106 V109.3 H293.3 V115.2 H300.6 V118.4 Z" fill="#aab6d6" stroke="#98a6c8" stroke-width=".8" stroke-linejoin="round"/>
<path d="M293,123 H309.3 V116.7 H313" fill="none" stroke="#7cbc7c" stroke-width="1.5"/>
<!-- calculator -->
<rect x="532.5" y="105.5" width="14" height="16" fill="#d6d6d6" stroke="#6e6e6e" stroke-width="1"/>
<rect x="534.4" y="107.4" width="10.2" height="3.2" fill="#1c241c"/>
<rect x="536.6" y="108" width="6" height="1.2" fill="#3ce03c"/>
<g fill="#fbfbfb" stroke="#8a8a8a" stroke-width=".5"><rect x="534.6" y="112.4" width="1.8" height="1.8"/><rect x="537.4" y="112.4" width="1.8" height="1.8"/><rect x="540.2" y="112.4" width="1.8" height="1.8"/><rect x="543" y="112.4" width="1.8" height="1.8"/>
<rect x="534.6" y="115.2" width="1.8" height="1.8"/><rect x="537.4" y="115.2" width="1.8" height="1.8"/><rect x="540.2" y="115.2" width="1.8" height="1.8"/><rect x="543" y="115.2" width="1.8" height="1.8"/>
<rect x="534.6" y="118" width="1.8" height="1.8"/><rect x="537.4" y="118" width="1.8" height="1.8"/><rect x="540.2" y="118" width="1.8" height="1.8"/><rect x="543" y="118" width="1.8" height="1.8"/></g>
<!-- flag -->
<path d="M576.6,108 V121" stroke="#7c6a58" stroke-width="1.3"/>
<path d="M577.3,109.6 C580,107.4 583.4,111.2 589,108.8 V117.6 C583.4,120 580,116.2 577.3,118.4 Z" fill="#e02a2a" stroke="#a81c1c" stroke-width=".6"/>
<path d="M580.6,109.2 V117.4 M584.6,110 V118.4" stroke="#f07070" stroke-width=".8"/>
<!-- info bubble -->
<path d="M611,106.6 H621.5 Q625,106.6 625,110 V116.4 Q625,119.8 621.5,119.8 H615.4 L609.6,124.4 L611.8,119.8 H611 Q607.5,119.8 607.5,116.4 V110 Q607.5,106.6 611,106.6 Z" fill="url(#gBub)" stroke="#dcc244" stroke-width="1.3" stroke-linejoin="round"/>
<text x="613.4" y="118" font-family="Liberation Serif, serif" font-style="italic" font-weight="bold" font-size="13" fill="#fff">i</text>
<!-- strip/family icons -->
<rect x="730.5" y="107.5" width="21" height="15" fill="url(#gPane)" stroke="#4c7cd0" stroke-width="1"/>
<path d="M738.5,112.6 L741.5,111.8 L744.4,109.4 L746.6,111.6 L748.6,113.6 L750.6,110.8" fill="none" stroke="#e01c1c" stroke-width="1.5"/>
<path d="M731.4,117.8 L733.8,119.6 L736.4,116.4 L739,116 L741.6,118 L744.4,118.6" fill="none" stroke="#142c9c" stroke-width="1.5"/>
<path d="M734.3,104.4 L737.8,108.8 H735.7 V113.8 H732.9 V108.8 H730.8 Z" fill="#34b434" stroke="#0c7c0c" stroke-width=".6"/>
<path d="M748,125.2 L744.5,120.8 H746.6 V115.8 H749.4 V120.8 H751.5 Z" fill="#34b434" stroke="#0c7c0c" stroke-width=".6"/>
<g opacity=".6">
<rect x="762.5" y="108.5" width="21" height="15" fill="#d0daec" stroke="#8ca8dc" stroke-width="1"/>
<path d="M763,118.5 H783" stroke="#8ca8dc" stroke-width="1"/>
<path d="M764.4,118.6 L766.2,121 L768,118.6" fill="none" stroke="#5060b0" stroke-width="1.2"/>
<path d="M776.4,112 L778.6,115 L780.8,112" fill="none" stroke="#e05858" stroke-width="1.2"/>
<path d="M770.6,120 C767,116 768,110 773.4,109.4 L773.2,106.6 L778.4,110.8 L773.6,114.6 L773.5,112.2 C770.6,112.4 769.6,116 772.4,119 Z" fill="#f4c48a" stroke="#e0a060" stroke-width=".6"/>
</g>
<rect x="794.5" y="106.5" width="21" height="7.4" fill="url(#gPane)" stroke="#4c7cd0" stroke-width="1"/>
<rect x="794.5" y="116.3" width="21" height="7.4" fill="url(#gPane)" stroke="#4c7cd0" stroke-width="1"/>
<path d="M805,110.6 L808,109.4 L810.4,107.6 L812.6,110 L814.6,111.6" fill="none" stroke="#e01c1c" stroke-width="1.5"/>
<path d="M795.6,120.4 L798,122 L800.4,119 L803,118.6 L805.6,120.4 L808,121" fill="none" stroke="#142c9c" stroke-width="1.5"/>
<path d="M797.2,108.6 L799,107 L802,110 L803.4,108.6 L803.8,113 L799.4,112.6 L800.8,111.2 Z" fill="#34b434" stroke="#0c7c0c" stroke-width=".5"/>
<path d="M813,121.6 L811.2,123.2 L808.2,120.2 L806.8,121.6 L806.4,117.2 L810.8,117.6 L809.4,119 Z" fill="#34b434" stroke="#0c7c0c" stroke-width=".5"/>
<!-- tab icon -->
<rect x="15.4" y="139.4" width="15.2" height="15.2" fill="#c2c6c6"/>
<rect x="17.5" y="141" width="11.5" height="11.6" fill="#fff"/>
<path d="M17.5,141 V152.5 H29" fill="none" stroke="#000" stroke-width="1.1"/>
<path d="M18,150.6 L25.6,143" stroke="#000" stroke-width="1.1"/>
<!-- tab close -->
<path d="M247.2,144.8 L253,151 M253,144.8 L247.2,151" stroke="#fff" stroke-width="2.1" stroke-linecap="round"/>
<!-- list eyes + tree -->
<g id="eye1"><ellipse cx="134.3" cy="232.6" rx="5.9" ry="3.5" fill="#e8ecf8" stroke="#5068b0" stroke-width="1.1"/><circle cx="134.3" cy="232.6" r="2.3" fill="#4a5ea4"/><circle cx="134.3" cy="232.6" r="1" fill="#1c2448"/></g>
<g><ellipse cx="134.3" cy="250.6" rx="5.9" ry="3.5" fill="#e8ecf8" stroke="#5068b0" stroke-width="1.1"/><circle cx="134.3" cy="250.6" r="2.3" fill="#4a5ea4"/><circle cx="134.3" cy="250.6" r="1" fill="#1c2448"/></g>
<path d="M21.5,225 V252 M22,233.5 H28 M22,251.5 H28" stroke="#808080" stroke-width="1" stroke-dasharray="1 1" shape-rendering="crispEdges" fill="none"/>
<!-- panel bevel corners -->
<path d="M15,520 V524 H11 Z" fill="#fff"/><path d="M11,524 L9,526 H11 Z" fill="#000"/>
<path d="M872,163 H875 V161 Z" fill="#fff"/>
<!-- status grip -->
<path d="M10.5,538 V544 M12.5,538 V544 M14.5,538 V544" stroke="#8a8a8a" stroke-width="1" shape-rendering="crispEdges"/>
<!-- window buttons glyphs -->
<rect x="797.6" y="8.4" width="10.8" height="3.8" rx=".6" fill="#fff" stroke="#4a4e58" stroke-width=".9"/>
<path d="M822.6,3.4 H833.4 V11.9 H822.6 Z M825.6,6.4 V9 H830.4 V6.4 Z" fill="#fff" fill-rule="evenodd" stroke="#4a4e58" stroke-width=".9"/>
<path d="M858.2,5.2 L865.2,11 M865.2,5.2 L858.2,11" stroke="#4a3434" stroke-width="3.8" stroke-linecap="square"/>
<path d="M858.2,5.2 L865.2,11 M865.2,5.2 L858.2,11" stroke="#fff" stroke-width="2.3" stroke-linecap="square"/>
<!-- cadence logo -->
<rect x="809.4" y="37.3" width="5.2" height="1.1" fill="#e0202a"/>
<g transform="translate(0,50.6) scale(.65,1)" font-family="Liberation Sans, sans-serif" font-weight="bold" font-size="18" fill="#1a1a1a" style="filter:grayscale(1)"><text x="1228.3 1242.8 1259.2 1277.5 1295.7 1313.1 1327.8" y="0">cadence</text></g>
</svg>

</body>
</html>
